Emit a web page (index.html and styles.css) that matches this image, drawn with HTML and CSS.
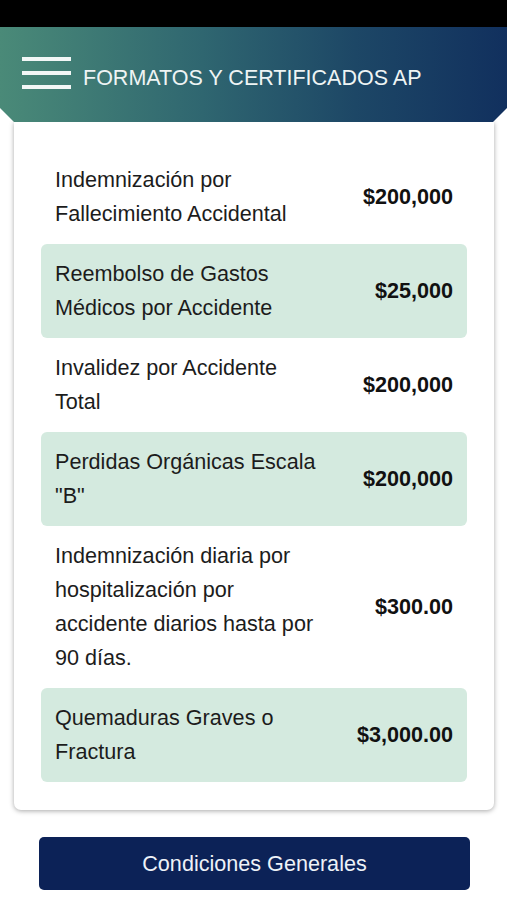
FILE: index.html
```html
<!DOCTYPE html>
<html lang="es">
  <head>
    <meta charset="utf-8">
    <title>Formatos y Certificados AP</title>
    <link rel="stylesheet" href="styles.css">
  </head>
  <body>
    <div class="statusbar"></div>
    <div class="header">
      <div class="menu">
        <span></span>
        <span></span>
        <span></span>
      </div>
      <div class="title">FORMATOS Y CERTIFICADOS AP</div>
    </div>

    <div class="card">
      <div class="row">
        <div class="label">Indemnización por<br>Fallecimiento Accidental</div>
        <div class="amount">$200,000</div>
      </div>
      <div class="row green">
        <div class="label">Reembolso de Gastos<br>Médicos por Accidente</div>
        <div class="amount">$25,000</div>
      </div>
      <div class="row">
        <div class="label">Invalidez por Accidente<br>Total</div>
        <div class="amount">$200,000</div>
      </div>
      <div class="row green">
        <div class="label">Perdidas Orgánicas Escala<br>"B"</div>
        <div class="amount">$200,000</div>
      </div>
      <div class="row">
        <div class="label">Indemnización diaria por<br>hospitalización por<br>accidente diarios hasta por<br>90 días.</div>
        <div class="amount">$300.00</div>
      </div>
      <div class="row green">
        <div class="label">Quemaduras Graves o<br>Fractura</div>
        <div class="amount">$3,000.00</div>
      </div>
    </div>

    <div class="actions">
      <button class="btn">Condiciones Generales</button>
    </div>
  </body>
</html>
```

FILE: styles.css
```css
body{
  margin: 0;
  background-color: white;
  font-family: "Liberation Sans", Arial, sans-serif;
  color: #1c1c1c;
}
.statusbar{
  height: 27px;
  background-color: black;
}
.header{
  height: 95px;
  display: flex;
  align-items: center;
  padding-left: 22px;
  background: linear-gradient(to right, #4a8a78 0%, #2f6670 40%, #1d4766 70%, #11305e 100%);
  clip-path: polygon(0 0, 100% 0, 100% 81px, calc(100% - 14px) 100%, 14px 100%, 0 81px);
  box-sizing: border-box;
}
.menu{
  width: 49px;
  display: flex;
  flex-direction: column;
  gap: 10px;
  margin-right: 12px;
  margin-top: -3px;
}
.menu span{
  display: block;
  height: 4px;
  background-color: #f2f7f6;
}
.title{
  color: #eef4f4;
  font-size: 21.5px;
  padding-top: 7px;
}
.card{
  margin: 0 13px 0 14px;
  padding: 28px 27px 28px 27px;
  background-color: white;
  border-radius: 0 0 7px 7px;
  box-shadow: 0 1px 5px rgba(0, 0, 0, 0.35);
}
.row{
  display: flex;
  align-items: center;
  justify-content: space-between;
  padding: 13px 14px 13px 14px;
  border-radius: 6px;
}
.row.green{
  background-color: #d4eadf;
}
.label{
  font-size: 21.6px;
  line-height: 34px;
}
.amount{
  font-size: 21.6px;
  font-weight: bold;
  color: #111;
}
.actions{
  padding: 27px 37px 0 39px;
}
.btn{
  width: 100%;
  height: 53px;
  border: none;
  border-radius: 5px;
  background-color: #0c2257;
  color: #eef2f8;
  font-family: "Liberation Sans", Arial, sans-serif;
  font-size: 21.6px;
}
```
